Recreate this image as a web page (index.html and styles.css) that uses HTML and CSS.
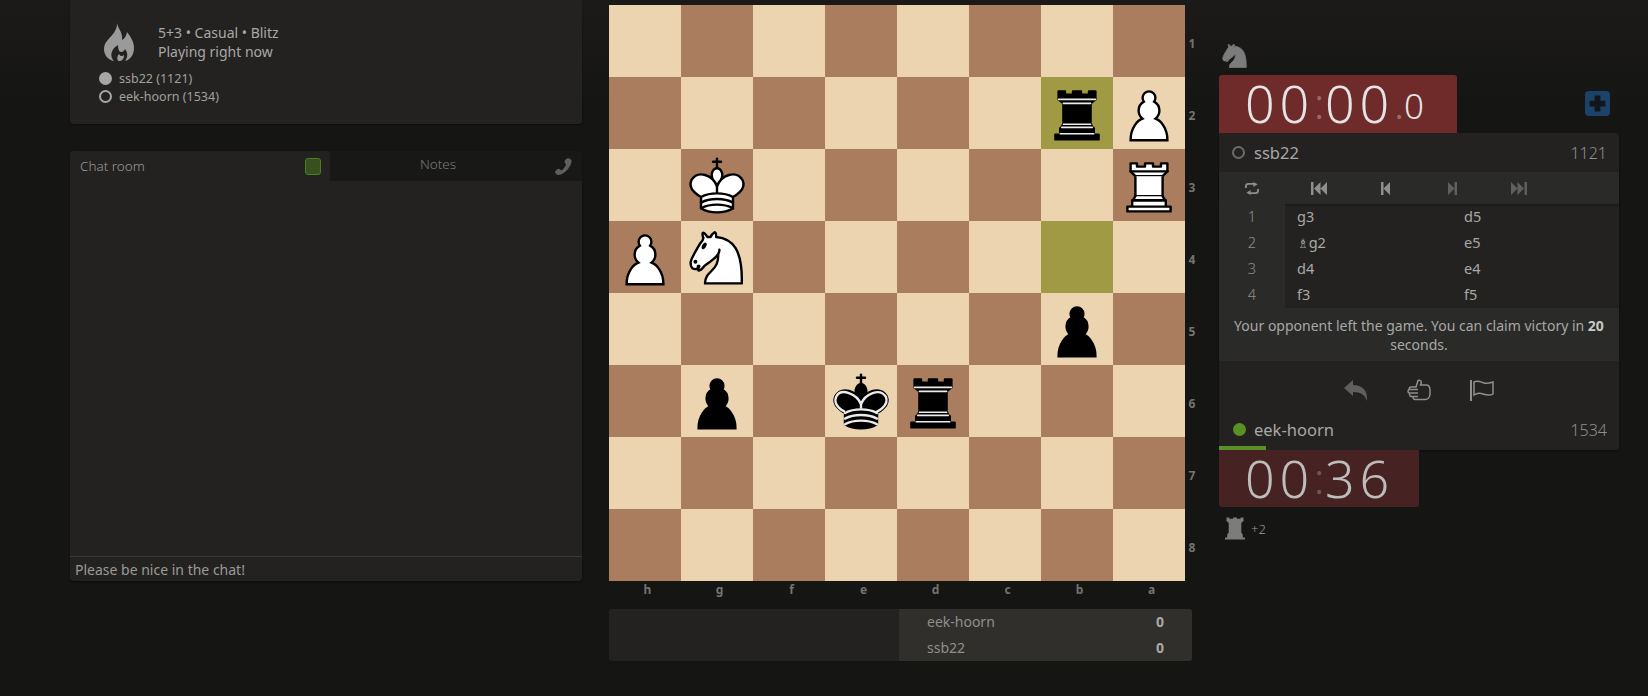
FILE: index.html
```html
<!DOCTYPE html>
<html>
<head>
    <meta charset="UTF-8">
    <title>ssb22 vs eek-hoorn</title>
    <link rel="stylesheet" href="styles.css">
</head>
<body>
    <svg class="sprites" xmlns="http://www.w3.org/2000/svg">
        <symbol id="wp" viewBox="0 0 45 45">
            <path d="M22.5 9c-2.21 0-4 1.79-4 4 0 .89.29 1.71.78 2.38C17.33 16.5 16 18.59 16 21c0 2.03.94 3.84 2.41 5.03-3 1.06-7.41 5.55-7.41 13.47h23c0-7.92-4.41-12.41-7.41-13.47 1.47-1.19 2.41-3 2.41-5.03 0-2.41-1.33-4.5-3.28-5.62.49-.67.78-1.49.78-2.38 0-2.21-1.79-4-4-4z" fill="#fff" stroke="#000" stroke-width="1.5" stroke-linecap="round"/>
        </symbol>
        <symbol id="bp" viewBox="0 0 45 45">
            <path d="M22.5 9c-2.21 0-4 1.79-4 4 0 .89.29 1.71.78 2.38C17.33 16.5 16 18.59 16 21c0 2.03.94 3.84 2.41 5.03-3 1.06-7.41 5.55-7.41 13.47h23c0-7.92-4.41-12.41-7.41-13.47 1.47-1.19 2.41-3 2.41-5.03 0-2.41-1.33-4.5-3.28-5.62.49-.67.78-1.49.78-2.38 0-2.21-1.79-4-4-4z" fill="#000" stroke="#000" stroke-width="1.5" stroke-linecap="round"/>
        </symbol>
        <symbol id="wr" viewBox="0 0 45 45">
            <g fill="#fff" fill-rule="evenodd" stroke="#000" stroke-width="1.5" stroke-linecap="round" stroke-linejoin="round">
                <path d="M9 39h27v-3H9v3zM12 36v-4h21v4H12zM11 14V9h4v2h5V9h5v2h5V9h4v5" stroke-linecap="butt"/>
                <path d="M34 14l-3 3H14l-3-3"/>
                <path d="M31 17v12.5H14V17" stroke-linecap="butt" stroke-linejoin="miter"/>
                <path d="M31 29.5l1.5 2.5h-20l1.5-2.5"/>
                <path d="M11 14h23" fill="none" stroke-linejoin="miter"/>
            </g>
        </symbol>
        <symbol id="br" viewBox="0 0 45 45">
            <g fill-rule="evenodd" stroke="#000" stroke-width="1.5" stroke-linecap="round" stroke-linejoin="round">
                <path d="M9 39h27v-3H9v3zM12.5 32l1.5-2.5h17l1.5 2.5h-20zM12 36v-4h21v4H12z" stroke-linecap="butt"/>
                <path d="M14 29.5v-13h17v13H14z" stroke-linecap="butt" stroke-linejoin="miter"/>
                <path d="M14 16.5L11 14h23l-3 2.5H14zM11 14V9h4v2h5V9h5v2h5V9h4v5H11z" stroke-linecap="butt"/>
                <path d="M12 35.5h21M13 31.5h19M14 29.5h17M14 16.5h17M11 14h23" fill="none" stroke="#ececec" stroke-width="1" stroke-linejoin="miter"/>
            </g>
        </symbol>
        <symbol id="wk" viewBox="0 0 45 45">
            <g fill="none" fill-rule="evenodd" stroke="#000" stroke-width="1.5" stroke-linecap="round" stroke-linejoin="round">
                <path d="M22.5 11.63V6M20 8h5" stroke-linejoin="miter"/>
                <path d="M22.5 25s4.5-7.5 3-10.5c0 0-1-2.5-3-2.5s-3 2.5-3 2.5c-1.5 3 3 10.5 3 10.5" fill="#fff" stroke-linecap="butt" stroke-linejoin="miter"/>
                <path d="M12.5 37c5.5 3.5 14.5 3.5 20 0v-7s9-4.5 6-10.5c-4-6.5-13.5-3.5-16 4V27v-3.5c-2.5-7.5-12-10.5-16-4-3 6 6 10.5 6 10.5v7" fill="#fff"/>
                <path d="M12.5 30c5.5-3 14.5-3 20 0M12.5 33.5c5.5-3 14.5-3 20 0M12.5 37c5.5-3 14.5-3 20 0"/>
            </g>
        </symbol>
        <symbol id="bk" viewBox="0 0 45 45">
            <g fill="none" fill-rule="evenodd" stroke="#000" stroke-width="1.5" stroke-linecap="round" stroke-linejoin="round">
                <path d="M22.5 11.63V6" stroke-linejoin="miter"/>
                <path d="M22.5 25s4.5-7.5 3-10.5c0 0-1-2.5-3-2.5s-3 2.5-3 2.5c-1.5 3 3 10.5 3 10.5" fill="#000" stroke-linecap="butt" stroke-linejoin="miter"/>
                <path d="M12.5 37c5.5 3.5 14.5 3.5 20 0v-7s9-4.5 6-10.5c-4-6.5-13.5-3.5-16 4V27v-3.5c-2.5-7.5-12-10.5-16-4-3 6 6 10.5 6 10.5v7" fill="#000"/>
                <path d="M20 8h5" stroke-linejoin="miter"/>
                <path d="M32 29.5s8.5-4 6.03-9.65C34.15 14 25 18 22.5 24.5l.01 2.1-.01-2.1C20 18 9.906 14 6.997 19.85c-2.497 5.65 4.853 9 4.853 9" stroke="#ececec"/>
                <path d="M12.5 30c5.5-3 14.5-3 20 0m-20 3.5c5.5-3 14.5-3 20 0m-20 3.5c5.5-3 14.5-3 20 0" stroke="#ececec"/>
            </g>
        </symbol>
        <symbol id="wn" viewBox="0 0 45 45">
            <g fill="none" fill-rule="evenodd" stroke="#000" stroke-width="1.5" stroke-linecap="round" stroke-linejoin="round">
                <path d="M22 10c10.5 1 16.5 8 16 29H15c0-9 10-6.5 8-21" fill="#fff"/>
                <path d="M24 18c.38 2.91-5.55 7.37-8 9-3 2-2.82 4.34-5 4-1.042-.94 1.41-3.04 0-3-1 0 .19 1.23-1 2-1 0-4.003 1-4-4 0-2 6-12 6-12s1.89-1.9 2-3.5c-.73-.994-.5-2-.5-3 1-1 3 2.5 3 2.5h2s.78-1.992 2.5-3c1 0 1 3 1 3" fill="#fff"/>
                <path d="M9.5 25.5a.5.5 0 1 1-1 0 .5.5 0 1 1 1 0zm5.433-9.75a.5 1.5 30 1 1-.866-.5.5 1.5 30 1 1 .866.5z" fill="#000"/>
            </g>
        </symbol>
    </svg>

    <div class="page">
        <!-- left column -->
        <div class="side">
            <div class="game-info">
                <div class="game-head">
                    <svg class="flame" viewBox="0 0 30 38">
                        <path d="M13 0C14 6 19 9 18 17C20 16 22 14 23 9C27 14 30 19 30 25C30 32 26 37 21 38C24 34 24 30 21 26C20 28 19 29 17 29C15 29 14 26 14 22C9 25 6 30 8 35C8.5 36.5 9.5 37.5 10 38C4 37 0 32 0 26C0 18 7 15 11 8C12.5 5.5 13 3 13 0Z"/>
                        <path d="M15 31C16 33 18 34 20 32C20 36 18 38 15 38C12.5 37.5 13 33 15 31Z"/>
                    </svg>
                    <div class="game-text">
                        <div>5+3 • Casual • Blitz</div>
                        <div>Playing right now</div>
                    </div>
                </div>
                <div class="game-player"><span class="dot dot-full"></span>ssb22 (1121)</div>
                <div class="game-player"><span class="dot dot-ring"></span>eek-hoorn (1534)</div>
            </div>

            <div class="chat">
                <div class="chat-tabs">
                    <div class="chat-tab active">
                        <span>Chat room</span>
                        <span class="chat-toggle"></span>
                    </div>
                    <div class="chat-tab notes">
                        <span>Notes</span>
                        <svg class="phone" viewBox="0 0 18 18">
                            <path d="M13 0.5C14.5 0 16.5 1 17.5 2.5C18 4 17 7.5 14 11.5C11 15.5 6.5 18 4 18C2 18 0.5 16.5 0 15C0 14 2.5 11.5 4 11.5C5 11.5 5.5 13 6.5 13C8 13 12 8 11.5 6.5C11.2 5.5 10 5.2 10 4C10 3 11.5 1 13 0.5Z"/>
                        </svg>
                    </div>
                </div>
                <div class="chat-body"></div>
                <div class="chat-input">Please be nice in the chat!</div>
            </div>
        </div>

        <!-- board -->
        <div class="board-col">
            <div class="board-wrap">
                <div class="board">
                    <div class="sq light"></div><div class="sq dark"></div><div class="sq light"></div><div class="sq dark"></div><div class="sq light"></div><div class="sq dark"></div><div class="sq light"></div><div class="sq dark"></div>
                    <div class="sq dark"></div><div class="sq light"></div><div class="sq dark"></div><div class="sq light"></div><div class="sq dark"></div><div class="sq light"></div><div class="sq last"><svg class="piece"><use href="#br"/></svg></div><div class="sq light"><svg class="piece"><use href="#wp"/></svg></div>
                    <div class="sq light"></div><div class="sq dark"><svg class="piece"><use href="#wk"/></svg></div><div class="sq light"></div><div class="sq dark"></div><div class="sq light"></div><div class="sq dark"></div><div class="sq light"></div><div class="sq dark"><svg class="piece"><use href="#wr"/></svg></div>
                    <div class="sq dark"><svg class="piece"><use href="#wp"/></svg></div><div class="sq light"><svg class="piece"><use href="#wn"/></svg></div><div class="sq dark"></div><div class="sq light"></div><div class="sq dark"></div><div class="sq light"></div><div class="sq last"></div><div class="sq light"></div>
                    <div class="sq light"></div><div class="sq dark"></div><div class="sq light"></div><div class="sq dark"></div><div class="sq light"></div><div class="sq dark"></div><div class="sq light"><svg class="piece"><use href="#bp"/></svg></div><div class="sq dark"></div>
                    <div class="sq dark"></div><div class="sq light"><svg class="piece"><use href="#bp"/></svg></div><div class="sq dark"></div><div class="sq light"><svg class="piece"><use href="#bk"/></svg></div><div class="sq dark"><svg class="piece"><use href="#br"/></svg></div><div class="sq light"></div><div class="sq dark"></div><div class="sq light"></div>
                    <div class="sq light"></div><div class="sq dark"></div><div class="sq light"></div><div class="sq dark"></div><div class="sq light"></div><div class="sq dark"></div><div class="sq light"></div><div class="sq dark"></div>
                    <div class="sq dark"></div><div class="sq light"></div><div class="sq dark"></div><div class="sq light"></div><div class="sq dark"></div><div class="sq light"></div><div class="sq dark"></div><div class="sq light"></div>
                </div>
                <div class="ranks">
                    <span>1</span><span>2</span><span>3</span><span>4</span><span>5</span><span>6</span><span>7</span><span>8</span>
                </div>
                <div class="files">
                    <span>h</span><span>g</span><span>f</span><span>e</span><span>d</span><span>c</span><span>b</span><span>a</span>
                </div>
            </div>

            <div class="crosstable">
                <div class="cross-left"></div>
                <div class="cross-right">
                    <div class="cross-row"><span>eek-hoorn</span><b>0</b></div>
                    <div class="cross-row"><span>ssb22</span><b>0</b></div>
                </div>
            </div>
        </div>

        <!-- right column -->
        <div class="right">
            <div class="captured top">
                <svg class="cap-knight" viewBox="5 8 34 32">
                    <path d="M22 10c10.5 1 16.5 8 16 29H15c0-9 10-6.5 8-21"/>
                    <path d="M24 18c.38 2.91-5.55 7.37-8 9-3 2-2.82 4.34-5 4-1.042-.94 1.41-3.04 0-3-1 0 .19 1.23-1 2-1 0-4.003 1-4-4 0-2 6-12 6-12s1.89-1.9 2-3.5c-.73-.994-.5-2-.5-3 1-1 3 2.5 3 2.5h2s.78-1.992 2.5-3c1 0 1 3 1 3"/>
                </svg>
            </div>

            <div class="clock-row">
                <div class="clock clock-low">
                    <span class="digits">00</span><span class="sep">:</span><span class="digits">00</span><span class="sep tenth-sep">.</span><span class="tenths">0</span>
                </div>
                <div class="plus-btn">
                    <svg viewBox="0 0 16 16"><path d="M6 2.5h4V6h3.5v4H10v3.5H6V10H2.5V6H6z"/></svg>
                </div>
            </div>

            <div class="panel">
                <div class="player">
                    <span class="status off"></span>
                    <span class="player-name">ssb22</span>
                    <span class="player-rating">1121</span>
                </div>

                <div class="controls">
                    <div class="ctl">
                        <svg class="ico bright" viewBox="0 0 16 14">
                            <path d="M1.5 6.5V4.5C1.5 3 2.5 2 4 2H10" class="loop"/>
                            <path d="M14.5 7.5V9.5C14.5 11 13.5 12 12 12H6" class="loop"/>
                            <path d="M9.5 0L14 2.5L9.5 5.5Z"/>
                            <path d="M6.5 8.5L2 11.5L6.5 14Z"/>
                        </svg>
                    </div>
                    <div class="ctl">
                        <svg class="ico bright" viewBox="0 0 16 13"><path d="M0 0h2.5v13H0zM3 6.5L9.5 0v13zM9.5 6.5L16 0v13z"/></svg>
                    </div>
                    <div class="ctl">
                        <svg class="ico-small bright" viewBox="0 0 9 13"><path d="M0 0h2.5v13H0zM2.5 6.5L9 0v13z"/></svg>
                    </div>
                    <div class="ctl">
                        <svg class="ico-small" viewBox="0 0 9 13"><path d="M9 0H6.5v13H9zM6.5 6.5L0 0v13z"/></svg>
                    </div>
                    <div class="ctl">
                        <svg class="ico" viewBox="0 0 16 13"><path d="M16 0h-2.5v13H16zM13 6.5L6.5 0v13zM6.5 6.5L0 0v13z"/></svg>
                    </div>
                    <div class="ctl"></div>
                </div>

                <div class="moves">
                    <div class="idx">1</div><div class="mv">g3</div><div class="mv">d5</div>
                    <div class="idx">2</div><div class="mv"><span class="fig">♗</span>g2</div><div class="mv">e5</div>
                    <div class="idx">3</div><div class="mv">d4</div><div class="mv">e4</div>
                    <div class="idx">4</div><div class="mv">f3</div><div class="mv">f5</div>
                </div>

                <div class="notice">Your opponent left the game. You can claim victory in <b>20</b> seconds.</div>

                <div class="actions">
                    <svg class="act-takeback" viewBox="0 0 24 22">
                        <path d="M0 9L9 1V6C18 6 24 11 23 22C21 16 17 13 9 13V17Z"/>
                    </svg>
                    <svg class="act-line" viewBox="0 0 24 22">
                        <path d="M11 1.5C13 0.5 15 2 14 4.5L13.5 6H19C22 6 23 8 23 11V15C23 18 21 20.5 18 20.5H8C6 20.5 5.5 17.5 7 17.5H4C2.5 17.5 2 14.5 3.5 14H2.5C0.5 14 0.5 10.5 2.5 10.5H3C1.5 10.5 2 8 4 8H9Z"/>
                        <path d="M2.5 10.5H11M3.5 14H11M7 17.5H11"/>
                    </svg>
                    <svg class="act-line" viewBox="0 0 24 22">
                        <path d="M1 1V22" class="pole"/>
                        <path d="M4 3C8 1 11 3 14 4C17 5 20 4 23 3V15C20 17 16 16 13 15C10 14 7 14 4 16Z"/>
                    </svg>
                </div>

                <div class="player bottom">
                    <span class="status on"></span>
                    <span class="player-name">eek-hoorn</span>
                    <span class="player-rating">1534</span>
                </div>
                <div class="berserk-bar"><div class="berserk-fill"></div></div>
            </div>

            <div class="clock clock-dim">
                <span class="digits">00</span><span class="sep">:</span><span class="digits">36</span>
            </div>

            <div class="captured bottom-cap">
                <svg class="cap-rook" viewBox="9 9 27 30">
                    <path d="M9 39h27v-3h-3v-4l-2-2.5v-13l3-2.5V9h-4v2h-5V9h-5v2h-5V9h-4v5l3 2.5v13L12 32v4H9z"/>
                </svg>
                <span class="cap-score">+2</span>
            </div>
        </div>
    </div>
</body>
</html>
```

FILE: styles.css
```css
* {
    margin: 0;
    padding: 0;
    box-sizing: border-box;
    font-family: "Noto Sans", sans-serif;
}

body {
    background: linear-gradient(to bottom, #1b1a18 0, #151513 110px);
    background-color: #151513;
    height: 696px;
    overflow: hidden;
    color: #a8a8a6;
}

.sprites {
    position: absolute;
    width: 0;
    height: 0;
}

.page {
    display: flex;
    align-items: flex-start;
    padding-left: 70px;
}

/* left column */
.side {
    width: 512px;
    margin-right: 27px;
}

.game-info {
    height: 124px;
    padding: 23px 0 0 29px;
    background: #232220;
    border-radius: 0 0 4px 4px;
    box-shadow: 0 1px 2px rgba(0, 0, 0, 0.4);
}

.game-head {
    display: flex;
    height: 46px;
}

.flame {
    width: 30px;
    height: 38px;
    margin-left: 5px;
    margin-right: 24px;
    fill: #9a9a9a;
}

.game-text {
    font-size: 14px;
    line-height: 19px;
}

.game-player {
    display: flex;
    align-items: center;
    height: 18px;
    font-size: 12.5px;
    color: #a0a09e;
}

.dot {
    width: 13px;
    height: 13px;
    margin-right: 7px;
    border-radius: 50%;
}

.dot-full {
    background: #a6a6a6;
}

.dot-ring {
    border: 2px solid #a6a6a6;
}

.chat {
    display: flex;
    flex-direction: column;
    height: 430px;
    margin-top: 27px;
    background: #232220;
    border-radius: 4px;
    box-shadow: 0 1px 2px rgba(0, 0, 0, 0.4);
}

.chat-tabs {
    display: flex;
    height: 30px;
    background: #181816;
}

.chat-tab {
    display: flex;
    align-items: center;
    justify-content: space-between;
}

.chat-tab.active {
    width: 260px;
    padding: 0 9px 0 10px;
    background: #232220;
    border-radius: 4px 4px 0 0;
    font-size: 13.5px;
    font-weight: 300;
    color: #999;
}

.chat-toggle {
    width: 16px;
    height: 17px;
    background: #37501e;
    border: 1px solid #4d7d20;
    border-radius: 3px;
}

.chat-tab.notes {
    position: relative;
    flex: 1;
    justify-content: center;
    padding: 0 36px 4px 0;
    font-size: 13.5px;
    font-weight: 300;
    color: #7c7c7a;
}

.phone {
    position: absolute;
    right: 10px;
    top: 7px;
    width: 17px;
    height: 17px;
    fill: #5f5f5d;
}

.chat-body {
    flex: 1;
}

.chat-input {
    height: 25px;
    padding-left: 5px;
    border-top: 1px solid #383835;
    font-size: 14px;
    line-height: 25px;
    color: #9a9a98;
}

/* board */
.board-col {
    width: 610px;
    padding-top: 5px;
}

.board-wrap {
    display: grid;
    grid-template-columns: 576px 34px;
    grid-template-rows: 576px 16px;
}

.board {
    display: grid;
    grid-template-columns: repeat(8, 72px);
    grid-template-rows: repeat(8, 72px);
}

.sq.light {
    background: #ecd4b0;
}

.sq.dark {
    background: #a97d5d;
}

.sq.last {
    background: #a09a45;
}

.piece {
    display: block;
    width: 72px;
    height: 72px;
}

.ranks {
    display: flex;
    flex-direction: column;
    width: 14px;
}

.ranks span {
    flex: 1;
    display: flex;
    align-items: center;
    justify-content: center;
    padding-top: 4px;
    font-size: 12px;
    font-weight: 700;
    color: #737371;
}

.files {
    display: flex;
    align-items: center;
}

.files span {
    flex: 1;
    padding-left: 5px;
    text-align: center;
    font-size: 12px;
    font-weight: 700;
    color: #737371;
}

.crosstable {
    display: flex;
    width: 583px;
    height: 52px;
    margin-top: 12px;
    background: #232220;
    border-radius: 3px;
    overflow: hidden;
}

.cross-left {
    width: 290px;
}

.cross-right {
    flex: 1;
    padding: 0 28px;
    background: #302f2c;
    font-size: 14px;
    color: #8f8f8d;
}

.cross-row {
    display: flex;
    justify-content: space-between;
    height: 26px;
    line-height: 26px;
}

.cross-row b {
    color: #a8a8a6;
}

/* right column */
.right {
    width: 400px;
    padding-top: 44px;
}

.captured.top {
    height: 31px;
    padding-left: 3px;
}

.cap-knight {
    display: block;
    width: 25px;
    height: 25px;
    fill: #7c7c7c;
    stroke: #7c7c7c;
}

.clock-row {
    display: flex;
    justify-content: space-between;
    height: 58px;
}

.clock {
    display: flex;
    align-items: center;
    height: 58px;
    padding: 0 0 3px 26px;
    font-family: Roboto, sans-serif;
    font-size: 52px;
    font-weight: 300;
}

.clock-low {
    width: 238px;
    background: #6f2a2a;
    border-radius: 3px 3px 0 0;
    color: #e4e4e4;
}

.clock-dim {
    width: 200px;
    height: 57px;
    background: #462322;
    border-radius: 0 0 3px 3px;
    color: #bdbdbb;
}

.clock .digits {
    letter-spacing: 4.8px;
}

.clock .sep {
    width: 11px;
    text-align: left;
    font-size: 42px;
    opacity: 0.35;
}

.clock .tenth-sep {
    width: 10px;
}

.clock .tenths {
    font-size: 35px;
    padding-top: 6px;
}

.plus-btn {
    width: 25px;
    height: 25px;
    margin: 16px 9px 0 0;
    padding: 1px;
    background: #1c4269;
    border-radius: 4px;
}

.plus-btn svg {
    display: block;
    fill: #12161b;
}

.panel {
    background: #232220;
    border-radius: 0 3px 3px 3px;
    box-shadow: 0 1px 2px rgba(0, 0, 0, 0.4);
}

.player {
    display: flex;
    align-items: center;
    height: 39px;
    padding: 0 12px 0 13px;
    font-size: 16.5px;
}

.player.bottom {
    height: 35px;
    padding: 2px 12px 0 14px;
}

.status {
    width: 13px;
    height: 13px;
    margin-right: 9px;
    border-radius: 50%;
}

.status.off {
    border: 2px solid #6b6b69;
}

.status.on {
    background: #5a9126;
    margin-right: 8px;
}

.player-name {
    flex: 1;
}

.player-rating {
    font-size: 16px;
    font-weight: 300;
    color: #8e8e8c;
}

.controls {
    display: flex;
    height: 32px;
    background: #2a2a28;
    box-shadow: 0 1px 2px rgba(0, 0, 0, 0.3);
}

.ctl {
    flex: 1;
    display: flex;
    align-items: center;
    justify-content: center;
}

.ico {
    width: 16px;
    height: 13px;
    fill: #5f5f5d;
}

.ico-small {
    width: 9px;
    height: 13px;
    fill: #5f5f5d;
}

.ico.bright, .ico-small.bright {
    fill: #8f8f8d;
}

.loop {
    fill: none;
    stroke: #8f8f8d;
    stroke-width: 2;
}

.moves {
    display: grid;
    grid-template-columns: 66px 167px 167px;
    grid-auto-rows: 26px;
    font-size: 14.5px;
    line-height: 24px;
}

.idx {
    background: #2a2a28;
    text-align: center;
    font-weight: 300;
    color: #8e8e8c;
}

.mv {
    padding-left: 12px;
    color: #a8a8a6;
}

.fig {
    font-family: "DejaVu Sans", sans-serif;
    font-size: 13px;
    line-height: 1;
}

.notice {
    height: 53px;
    padding: 8px 12px 0;
    background: #2a2a28;
    text-align: center;
    font-size: 14px;
    line-height: 19px;
}

.notice b {
    color: #c8c8c6;
}

.actions {
    display: flex;
    justify-content: center;
    align-items: center;
    gap: 39px;
    height: 50px;
    padding-top: 8px;
}

.actions svg {
    width: 24px;
    height: 22px;
}

.act-takeback {
    fill: #5f5f5d;
}

.act-line {
    fill: none;
    stroke: #8f8f8d;
    stroke-width: 1.5;
}

.act-line .pole {
    stroke-width: 2;
}

.berserk-bar {
    height: 4px;
}

.berserk-fill {
    width: 47px;
    height: 4px;
    background: #5a9126;
}

.bottom-cap {
    display: flex;
    align-items: center;
    margin-top: 10px;
    padding-left: 6px;
}

.cap-rook {
    width: 20px;
    height: 23px;
    fill: #7c7c7c;
}

.cap-score {
    margin-left: 6px;
    font-size: 13px;
    font-weight: 300;
    color: #999997;
}
```
